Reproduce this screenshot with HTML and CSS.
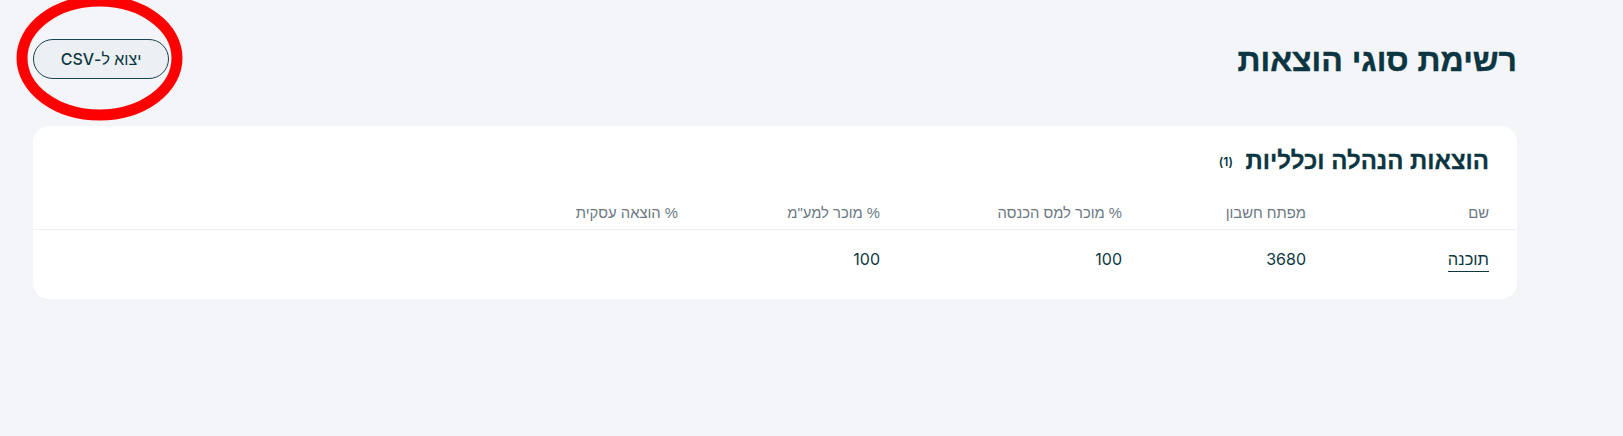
FILE: index.html
```html
<!DOCTYPE html>
<html lang="he" dir="rtl">
<head>
<meta charset="utf-8">
<title>רשימת סוגי הוצאות</title>
<link rel="stylesheet" href="styles.css">
</head>
<body>
<main class="page">
  <header class="page-header">
    <h1 class="page-title">רשימת סוגי הוצאות</h1>
    <button class="export-btn" type="button">יצוא ל-CSV</button>
  </header>

  <section class="card">
    <h2 class="card-title">הוצאות הנהלה וכלליות <span class="count">(1)</span></h2>
    <table class="data-table">
      <colgroup>
        <col class="c1"><col class="c2"><col class="c3"><col class="c4"><col class="c5">
      </colgroup>
      <thead>
        <tr>
          <th>שם</th>
          <th>מפתח חשבון</th>
          <th>% מוכר למס הכנסה</th>
          <th>% מוכר למע"מ</th>
          <th>% הוצאה עסקית</th>
        </tr>
      </thead>
      <tbody>
        <tr>
          <td><a class="name-link">תוכנה</a></td>
          <td class="num">3680</td>
          <td class="num">100</td>
          <td class="num">100</td>
          <td></td>
        </tr>
      </tbody>
    </table>
  </section>
</main>
<svg class="annotation" width="200" height="130" viewBox="0 0 200 130" aria-hidden="true">
  <ellipse cx="99.5" cy="58" rx="77.5" ry="57" fill="none" stroke="#ff0000" stroke-width="11"/>
</svg>
</body>
</html>
```

FILE: styles.css
```css
* { box-sizing: border-box; }

html, body {
  margin: 0;
  padding: 0;
}

body {
  background: #f4f5f9;
  font-family: "Inter", "Liberation Sans", Arial, sans-serif;
  color: #0d3842;
  width: 1623px;
  height: 436px;
  overflow: hidden;
  position: relative;
}

.page {
  padding: 39px 106px 0 33px;
}

.page-header {
  display: flex;
  justify-content: space-between;
  align-items: center;
  height: 40px;
}

.page-title {
  margin: 0;
  font-family: "Liberation Sans", Arial, sans-serif;
  font-size: 32px;
  font-weight: 700;
  color: #0b3641;
  line-height: 40px;
  padding-top: 2px;
  -webkit-text-stroke: 0.4px #0b3641;
}

.export-btn {
  width: 136px;
  height: 40px;
  border: 1px solid #174450;
  border-radius: 20px;
  background: #eceff4;
  color: #0d3842;
  font-family: "Inter", "Liberation Sans", Arial, sans-serif;
  font-size: 16px;
  font-weight: 500;
  padding: 0;
  cursor: pointer;
}

.card {
  margin-top: 47px;
  background: #ffffff;
  border-radius: 16px;
  padding: 20px 0 9px;
}

.card-title {
  margin: 0 28px;
  font-family: "Liberation Sans", Arial, sans-serif;
  font-size: 24px;
  font-weight: 700;
  line-height: 30px;
  color: #0b3641;
  -webkit-text-stroke: 0.3px #0b3641;
}

.count {
  font-family: "Inter", "Liberation Sans", Arial, sans-serif;
  font-size: 12px;
  font-weight: 600;
  margin-right: 6px;
  vertical-align: 3px;
  -webkit-text-stroke: 0;
}

.data-table {
  width: 100%;
  margin-top: 20px;
  border-collapse: collapse;
  table-layout: fixed;
}

.c1 { width: 211px; }
.c2 { width: 184px; }
.c3 { width: 242px; }
.c4 { width: 202px; }
.c5 { width: auto; }

.data-table th {
  text-align: right;
  font-family: "Liberation Sans", Arial, sans-serif;
  font-size: 14.8px;
  font-weight: 400;
  color: #6c7884;
  line-height: 20px;
  padding: 6px 0 6px;
  border-bottom: 1px solid #eef0f3;
}

.data-table th:first-child,
.data-table td:first-child {
  padding-right: 28px;
}

.data-table td {
  text-align: right;
  font-size: 16px;
  line-height: 22px;
  padding: 18px 0 20px;
  color: #0d3842;
}

.name-link {
  font-family: "Liberation Sans", Arial, sans-serif;
  font-size: 16.5px;
  color: #0d3842;
  text-decoration: none;
  border-bottom: 1.5px solid #0d3842;
  padding-bottom: 3px;
}

.num {
  font-family: "Inter", "Liberation Sans", Arial, sans-serif;
}

.annotation {
  position: absolute;
  top: 0;
  left: 0;
  pointer-events: none;
}
```
